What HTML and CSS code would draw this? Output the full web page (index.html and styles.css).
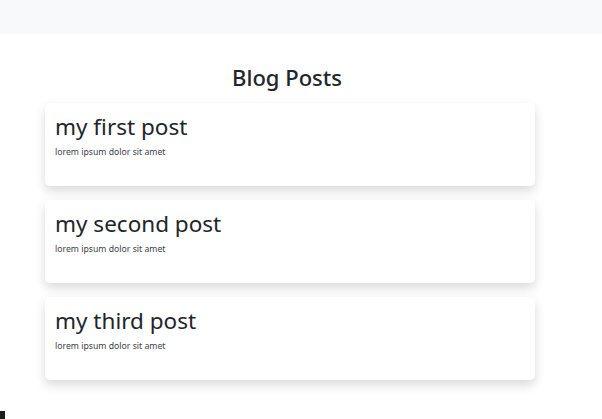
FILE: index.html
```html
<!DOCTYPE html>
<html lang="en">
<head>
<meta charset="utf-8">
<title>Blog Posts</title>
<link rel="stylesheet" href="styles.css">
</head>
<body>
<nav class="navbar"></nav>
<main class="container">
  <h1 class="page-title">Blog Posts</h1>
  <div class="posts">
    <article class="card">
      <h2 class="card-title">my first post</h2>
      <p class="card-text">lorem ipsum dolor sit amet</p>
    </article>
    <article class="card">
      <h2 class="card-title">my second post</h2>
      <p class="card-text">lorem ipsum dolor sit amet</p>
    </article>
    <article class="card">
      <h2 class="card-title">my third post</h2>
      <p class="card-text">lorem ipsum dolor sit amet</p>
    </article>
  </div>
</main>
<div class="corner-mark"></div>
</body>
</html>
```
FILE: styles.css
```css
html, body {
  margin: 0;
  padding: 0;
  background: #ffffff;
  font-family: "Noto Sans", "Open Sans", sans-serif;
  color: #212529;
}
body {
  height: 419px;
  overflow: hidden;
  position: relative;
}
.navbar {
  height: 34px;
  background: #f8f9fa;
}
.container {
  width: 490px;
  margin-left: 45px;
  padding-top: 27px;
}
.page-title {
  margin: 0 0 10px 0;
  padding-right: 6px;
  text-align: center;
  font-size: 22px;
  font-weight: 500;
  line-height: 32px;
}
.posts {
  display: flex;
  flex-direction: column;
  gap: 14px;
}
.card {
  height: 83px;
  box-sizing: border-box;
  padding: 9px 10px;
  background: #fff;
  border-radius: 5px;
  box-shadow: 0 5px 11px rgba(0, 0, 0, 0.15);
}
.card-title {
  margin: 0;
  font-size: 22.5px;
  font-weight: 450;
  line-height: 30px;
}
.card-text {
  margin: 4px 0 0 0;
  font-size: 8.7px;
  line-height: 12px;
  color: #3d4349;
}
.corner-mark {
  position: absolute;
  left: 0;
  bottom: 0;
  width: 5px;
  height: 8px;
  background: #1a1f1a;
}
```
